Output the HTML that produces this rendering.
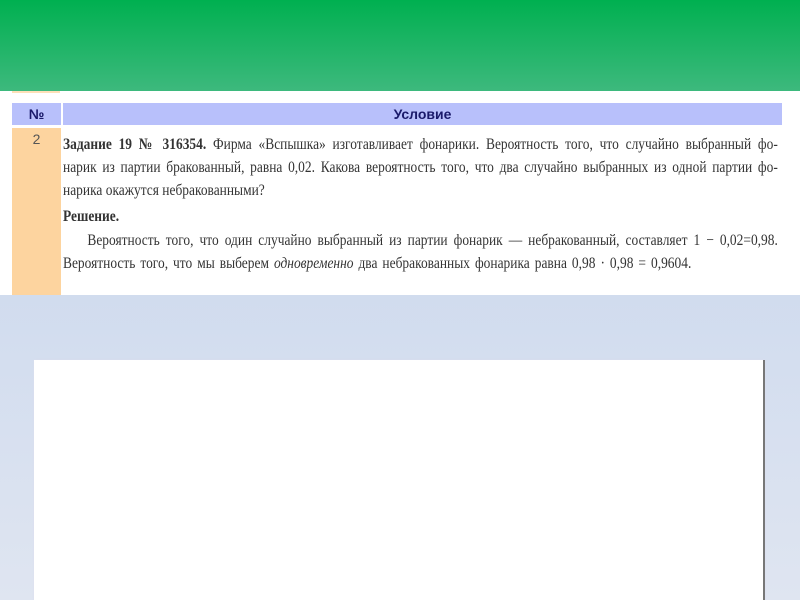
<!DOCTYPE html>
<html><head><meta charset="utf-8"><style>
body{margin:0;width:800px;height:600px;overflow:hidden;position:relative;background:linear-gradient(#c3d3ec,#dfe5f1);font-family:"Liberation Serif",serif;}
.green{position:absolute;left:0;top:0;width:800px;height:91px;background:linear-gradient(#00b050,#3db97d);}
.white{position:absolute;left:0;top:91px;width:800px;height:204px;background:#fff;}
.strip{position:absolute;left:12px;top:91px;width:48px;height:2px;background:#fde0b8;}
.hn{position:absolute;left:12px;top:103px;width:49px;height:22px;background:#b8c0fb;color:#1a1a6a;font:bold 14px "Liberation Sans",sans-serif;text-align:center;line-height:22px;}
.hc{position:absolute;left:63px;top:103px;width:719px;height:22px;background:#b8c0fb;color:#1a1a6a;font:bold 14px "Liberation Sans",sans-serif;text-align:center;line-height:22px;}
.oc{position:absolute;left:12px;top:128px;width:49px;height:167px;background:#fdd49f;color:#555;font:14px "Liberation Sans",sans-serif;text-align:center;padding-top:3px;box-sizing:border-box;}
.ln{position:absolute;left:63px;width:851px;font-size:16px;color:#333;white-space:nowrap;text-align:justify;text-align-last:justify;line-height:18px;transform:scaleX(0.84);transform-origin:0 0;}
.box{position:absolute;left:34px;top:360px;width:729px;height:240px;background:#fff;border-right:2px solid #777;box-shadow:0 0 2px #dde;}
</style></head><body>
<div class="green"></div>
<div class="white"></div>
<div class="strip"></div>
<div class="hn">№</div>
<div class="hc">Условие</div>
<div class="oc">2</div>
<div class="ln" style="top:136px"><b>Задание 19 № 316354.</b> Фирма «Вспышка» изготавливает фонарики. Вероятность того, что случайно выбранный фо-</div>
<div class="ln" style="top:159px">нарик из партии бракованный, равна 0,02. Какова вероятность того, что два случайно выбранных из одной партии фо-</div>
<div class="ln" style="top:182px;text-align-last:left">нарика окажутся небракованными?</div>
<div class="ln" style="top:208px;text-align-last:left"><b>Решение.</b></div>
<div class="ln" style="top:232px;padding-left:29px;width:822px">Вероятность того, что один случайно выбранный из партии фонарик — небракованный, составляет 1 − 0,02=0,98.</div>
<div class="ln" style="top:255px;width:748px">Вероятность того, что мы выберем <i>одновременно</i> два небракованных фонарика равна 0,98 · 0,98 = 0,9604.</div>
<div class="box"></div>
</body></html>
